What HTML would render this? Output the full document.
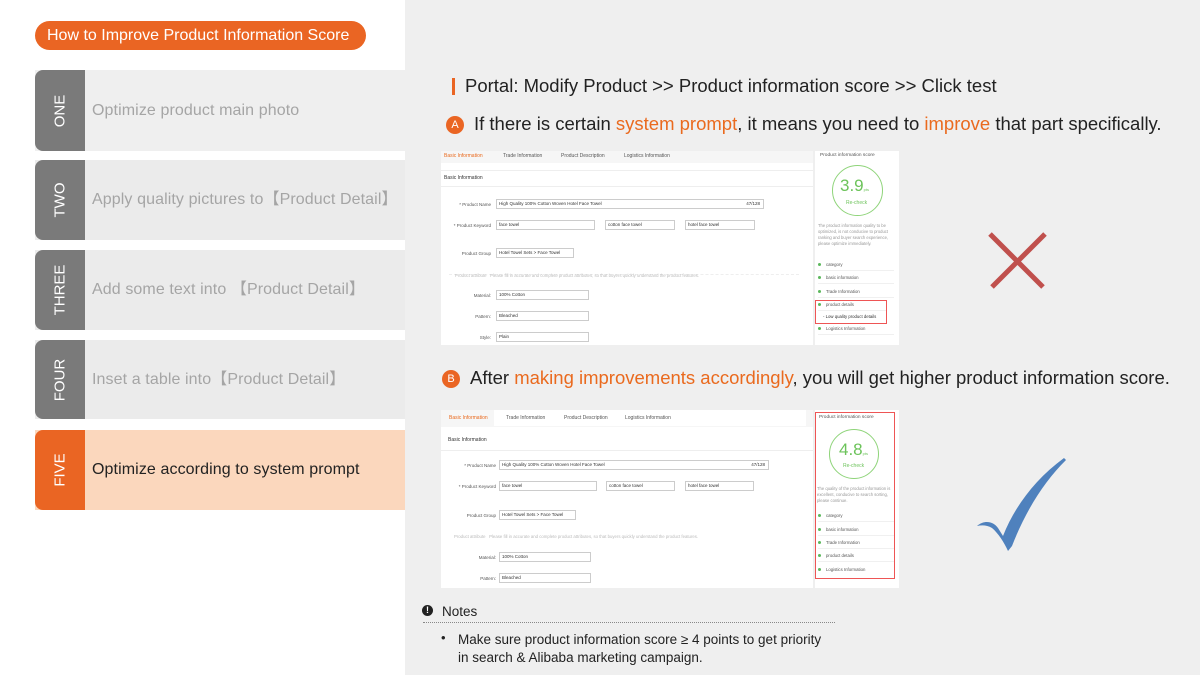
<!DOCTYPE html>
<html><head><meta charset="utf-8"><style>
*{margin:0;padding:0;box-sizing:border-box}
body{width:1200px;height:675px;position:relative;overflow:hidden;background:#fff;font-family:"Liberation Sans",sans-serif}
.abs{position:absolute}
.right{left:405px;top:0;width:795px;height:675px;background:#efefef}
.pill{left:35px;top:21px;width:331px;height:29px;background:#ea6523;border-radius:15px;color:#fff;font-size:16px;line-height:29px;padding-left:12px;letter-spacing:0}
.row{left:35px;width:370px;height:81px;background:#efefef}
.tab{position:absolute;left:0;top:0;width:50px;height:100%;background:#7a7a7a;border-radius:8px 0 0 8px;}
.tab span{position:absolute;left:25px;top:50%;transform:translate(-50%,-50%) rotate(-90deg);color:#fff;font-size:15px;white-space:nowrap}
.row .t{position:absolute;left:57px;top:0;line-height:81px;font-size:16px;color:#a5a5a5;white-space:nowrap;letter-spacing:0.1px}
.shot{background:#fff;font-size:5px;color:#555}
.f{position:absolute;border:1px solid #ccc;background:#fff;height:10px;font-size:4.5px;line-height:8px;padding-left:2px;color:#333}
.lab{position:absolute;font-size:4.5px;color:#555;text-align:right}
.o{color:#ea6a1e}
.circle{position:absolute;border:1.5px solid #8fd47a;border-radius:50%}
.li{position:absolute;left:3px;font-size:4.3px;color:#555;border-bottom:1px solid #f0f0f0;width:76px;height:12px;line-height:12px}
.li:before{content:"";display:inline-block;width:3px;height:3px;border-radius:50%;background:#5cb85c;margin-right:5px;vertical-align:middle}
.big{font-size:18.5px;color:#222;white-space:nowrap;letter-spacing:0}
</style></head><body>
<div class="abs right"></div>
<div class="abs pill">How to Improve Product Information Score</div>

<div class="abs row" style="top:70px"><div class="tab"><span>ONE</span></div><div class="t">Optimize product main photo</div></div>
<div class="abs row" style="top:160px;height:80px;background:#ebebeb"><div class="tab"><span>TWO</span></div><div class="t" style="line-height:80px">Apply quality pictures to【Product Detail】</div></div>
<div class="abs row" style="top:250px;height:80px;background:#ebebeb"><div class="tab"><span>THREE</span></div><div class="t" style="line-height:80px">Add some text into 【Product Detail】</div></div>
<div class="abs row" style="top:340px;height:79px;background:#ebebeb"><div class="tab"><span>FOUR</span></div><div class="t" style="line-height:79px">Inset a table into【Product Detail】</div></div>
<div class="abs row" style="top:430px;height:80px;background:#fbd7bd"><div class="tab" style="background:#ea6523"><span>FIVE</span></div><div class="t" style="line-height:80px;color:#222">Optimize according to system prompt</div></div>

<div class="abs" style="left:452px;top:78px;width:3px;height:17px;background:#ea6523"></div>
<div class="abs big" style="left:465px;top:75px">Portal: Modify Product &gt;&gt; Product information score &gt;&gt; Click test</div>

<div class="abs" style="left:446px;top:116px;width:18px;height:18px;border-radius:50%;background:#ea6523;color:#fff;font-size:11px;text-align:center;line-height:18px">A</div>
<div class="abs big" style="left:474px;top:113px">If there is certain <span class="o">system prompt</span>, it means you need to <span class="o">improve</span> that part specifically.</div>

<!-- Screenshot A -->
<div class="abs shot" style="left:441px;top:151px;width:372px;height:194px">
  <div style="position:absolute;left:0;top:0;width:372px;height:12px;background:#f6f6f6"></div>
  <div style="position:absolute;left:3px;top:2px;color:#ea6a1e">Basic Information</div>
  <div style="position:absolute;left:62px;top:2px">Trade Information</div>
  <div style="position:absolute;left:120px;top:2px">Product Description</div>
  <div style="position:absolute;left:183px;top:2px">Logistics Information</div>
  <div style="position:absolute;left:0;top:19px;width:372px;height:1px;background:#eee"></div>
  <div style="position:absolute;left:3px;top:24px;color:#333">Basic Information</div>
  <div style="position:absolute;left:0;top:35px;width:372px;height:1px;background:#eee"></div>
  <div class="lab" style="left:0;top:51px;width:50px">* Product Name</div>
  <div class="f" style="left:55px;top:48px;width:268px">High Quality 100% Cotton Woven Hotel Face Towel<span style="float:right;padding-right:3px">47/128</span></div>
  <div class="lab" style="left:0;top:72px;width:50px">* Product Keyword</div>
  <div class="f" style="left:55px;top:69px;width:99px">face towel</div>
  <div class="f" style="left:164px;top:69px;width:70px">cotton face towel</div>
  <div class="f" style="left:244px;top:69px;width:70px">hotel face towel</div>
  <div class="lab" style="left:0;top:100px;width:50px">Product Group</div>
  <div class="f" style="left:55px;top:97px;width:78px">Hotel Towel Sets &gt; Face Towel</div>
  <div style="position:absolute;left:8px;top:123px;width:350px;border-top:1px dashed #eee"></div>
  <div style="position:absolute;left:14px;top:122px;color:#bbb;font-size:4.3px">Product attribute &nbsp; Please fill in accurate and complete product attributes, so that buyers quickly understand the product features.</div>
  <div class="lab" style="left:0;top:142px;width:50px">Material:</div>
  <div class="f" style="left:55px;top:139px;width:93px">100% Cotton</div>
  <div class="lab" style="left:0;top:163px;width:50px">Pattern:</div>
  <div class="f" style="left:55px;top:160px;width:93px">Bleached</div>
  <div class="lab" style="left:0;top:184px;width:50px">Style:</div>
  <div class="f" style="left:55px;top:181px;width:93px">Plain</div>
</div>
<div class="abs shot" style="left:815px;top:151px;width:84px;height:194px">
  <div style="position:absolute;left:5px;top:2px;font-size:4.8px">Product information score</div>
  <div class="circle" style="left:17px;top:14px;width:51px;height:51px"></div>
  <div style="position:absolute;left:25px;top:25px;font-size:17px;color:#6cc35a">3.9<span style="font-size:4px">pts</span></div>
  <div style="position:absolute;left:31px;top:49px;font-size:5px;color:#6cc35a">Re-check</div>
  <div style="position:absolute;left:3px;top:72px;width:80px;font-size:4.2px;color:#999;line-height:6px">The product information quality to be optimized, is not conducive to product ranking and buyer search experience, please optimize immediately.</div>
  <div class="li" style="top:108px">category</div>
  <div class="li" style="top:121px">basic information</div>
  <div class="li" style="top:135px">Trade Information</div>
  <div style="position:absolute;left:0;top:149px;width:72px;height:24px;border:1px solid #e55"></div>
  <div class="li" style="top:148px;width:68px">product details</div>
  <div style="position:absolute;left:8px;top:163px;font-size:4.3px;color:#333">- Low quality product details</div>
  <div class="li" style="top:172px">Logistics Information</div>
</div>

<!-- X -->
<svg class="abs" style="left:985px;top:230px" width="65" height="62"><path d="M5 4 L58 57 M60 4 L7 57" stroke="#c0504d" stroke-width="5"/></svg>

<div class="abs" style="left:442px;top:370px;width:18px;height:18px;border-radius:50%;background:#ea6523;color:#fff;font-size:11px;text-align:center;line-height:18px">B</div>
<div class="abs big" style="left:470px;top:367px">After <span class="o">making improvements accordingly</span>, you will get higher product information score.</div>

<!-- Screenshot B -->
<div class="abs shot" style="left:441px;top:410px;width:372px;height:178px">
  <div style="position:absolute;left:0;top:0;width:372px;height:17px;background:#f6f6f6"></div>
  <div style="position:absolute;left:53px;top:0;width:312px;height:16px;background:#fff"></div>
  <div style="position:absolute;left:8px;top:5px;color:#ea6a1e">Basic Information</div>
  <div style="position:absolute;left:65px;top:5px">Trade Information</div>
  <div style="position:absolute;left:123px;top:5px">Product Description</div>
  <div style="position:absolute;left:184px;top:5px">Logistics Information</div>
  <div style="position:absolute;left:7px;top:27px;color:#333">Basic Information</div>
  <div style="position:absolute;left:0;top:40px;width:372px;height:1px;background:#eee"></div>
  <div class="lab" style="left:0;top:53px;width:55px">* Product Name</div>
  <div class="f" style="left:58px;top:50px;width:270px">High Quality 100% Cotton Woven Hotel Face Towel<span style="float:right;padding-right:3px">47/128</span></div>
  <div class="lab" style="left:0;top:74px;width:55px">* Product Keyword</div>
  <div class="f" style="left:58px;top:71px;width:98px">face towel</div>
  <div class="f" style="left:165px;top:71px;width:69px">cotton face towel</div>
  <div class="f" style="left:244px;top:71px;width:69px">hotel face towel</div>
  <div class="lab" style="left:0;top:103px;width:55px">Product Group</div>
  <div class="f" style="left:58px;top:100px;width:77px">Hotel Towel Sets &gt; Face Towel</div>
  <div style="position:absolute;left:13px;top:124px;color:#bbb;font-size:4.3px">Product attribute &nbsp; Please fill in accurate and complete product attributes, so that buyers quickly understand the product features.</div>
  <div class="lab" style="left:0;top:145px;width:55px">Material:</div>
  <div class="f" style="left:58px;top:142px;width:92px">100% Cotton</div>
  <div class="lab" style="left:0;top:166px;width:55px">Pattern:</div>
  <div class="f" style="left:58px;top:163px;width:92px">Bleached</div>
</div>
<div class="abs shot" style="left:815px;top:410px;width:84px;height:178px">
  <div style="position:absolute;left:0;top:2px;width:80px;height:167px;border:1px solid #e55"></div>
  <div style="position:absolute;left:4px;top:5px;font-size:4.8px">Product information score</div>
  <div class="circle" style="left:14px;top:19px;width:50px;height:50px"></div>
  <div style="position:absolute;left:24px;top:30px;font-size:17px;color:#6cc35a">4.8<span style="font-size:4px">pts</span></div>
  <div style="position:absolute;left:28px;top:53px;font-size:5px;color:#6cc35a">Re-check</div>
  <div style="position:absolute;left:2px;top:76px;width:78px;font-size:4.2px;color:#999;line-height:6px">The quality of the product information is excellent, conducive to search sorting, please continue.</div>
  <div class="li" style="top:100px">category</div>
  <div class="li" style="top:114px">basic information</div>
  <div class="li" style="top:127px">Trade Information</div>
  <div class="li" style="top:140px">product details</div>
  <div class="li" style="top:154px;border:none">Logistics Information</div>
</div>

<!-- check -->
<svg class="abs" style="left:974px;top:456px" width="94" height="96"><path d="M3 70 C10 64 19 65 24 72 L29 80 C40 52 60 24 90 2 L92 4 C70 26 52 54 38 90 L34 95 C30 86 24 77 18 72 C13 69 8 69 3 70 Z" fill="#4f81bd"/></svg>

<!-- Notes -->
<div class="abs" style="left:422px;top:605px;width:11px;height:11px;border-radius:50%;background:#222;color:#fff;font-size:9px;font-weight:bold;text-align:center;line-height:11px">!</div>
<div class="abs" style="left:442px;top:604px;font-size:13.5px;color:#222">Notes</div>
<div class="abs" style="left:423px;top:622px;width:412px;border-top:1.5px dotted #888"></div>
<div class="abs" style="left:441px;top:630px;font-size:13px;color:#222">•</div>
<div class="abs" style="left:458px;top:631px;font-size:13.5px;color:#222;line-height:18px;white-space:nowrap;letter-spacing:0">Make sure product information score ≥ 4 points to get priority<br>in search &amp; Alibaba marketing campaign.</div>
</body></html>
